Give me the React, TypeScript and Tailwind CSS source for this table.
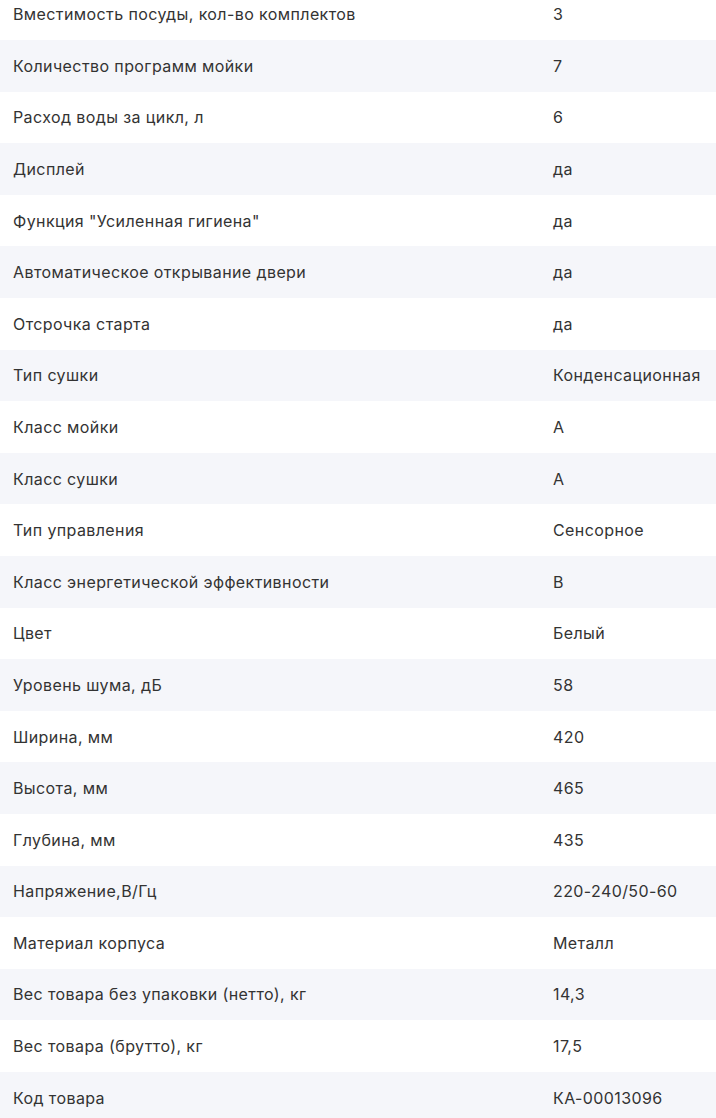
import React from "react";

const specs: [string, string][] = [
  ["Вместимость посуды, кол-во комплектов", "3"],
  ["Количество программ мойки", "7"],
  ["Расход воды за цикл, л", "6"],
  ["Дисплей", "да"],
  ["Функция \"Усиленная гигиена\"", "да"],
  ["Автоматическое открывание двери", "да"],
  ["Отсрочка старта", "да"],
  ["Тип сушки", "Конденсационная"],
  ["Класс мойки", "А"],
  ["Класс сушки", "А"],
  ["Тип управления", "Сенсорное"],
  ["Класс энергетической эффективности", "В"],
  ["Цвет", "Белый"],
  ["Уровень шума, дБ", "58"],
  ["Ширина, мм", "420"],
  ["Высота, мм", "465"],
  ["Глубина, мм", "435"],
  ["Напряжение,В/Гц", "220-240/50-60"],
  ["Материал корпуса", "Металл"],
  ["Вес товара без упаковки (нетто), кг", "14,3"],
  ["Вес товара (брутто), кг", "17,5"],
  ["Код товара", "КА-00013096"],
];

const App: React.FC = () => {
  return (
    <div className="h-[1118px] overflow-hidden bg-white font-['Inter',sans-serif] text-[16px] tracking-[0.4px] text-[#333]">
      <div className="-mt-[11.6px]">
        {specs.map(([name, value], i) => (
          <div
            key={name}
            className={`flex h-[51.6px] items-center ${i % 2 === 1 ? "bg-[#f5f6fa]" : "bg-white"}`}
          >
            <div className="w-[553px] shrink-0 pl-[13px]">{name}</div>
            <div className="whitespace-nowrap">{value}</div>
          </div>
        ))}
      </div>
    </div>
  );
};

export default App;
